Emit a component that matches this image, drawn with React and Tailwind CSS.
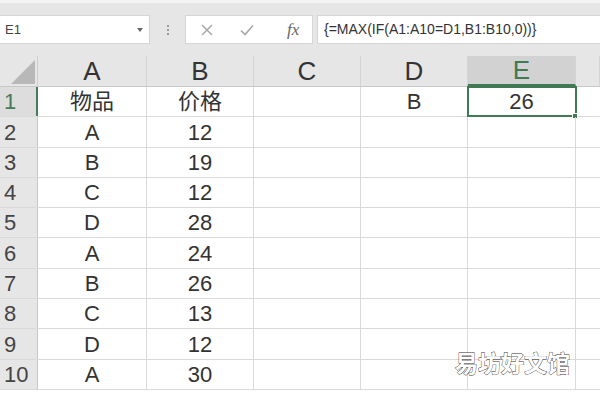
import React from 'react';

const cols = [
    { name: 'A', w: 'w-[109px]' },
    { name: 'B', w: 'w-[107px]' },
    { name: 'C', w: 'w-[107px]' },
    { name: 'D', w: 'w-[107px]' },
    { name: 'E', w: 'w-[108px]' },
    { name: '', w: 'w-[24px]' },
];

const rows = [
    { n: 1, h: 'h-[30px]', a: '物品', b: '价格', d: 'B', e: '26' },
    { n: 2, h: 'h-[31px]', a: 'A', b: '12' },
    { n: 3, h: 'h-[30px]', a: 'B', b: '19' },
    { n: 4, h: 'h-[30px]', a: 'C', b: '12' },
    { n: 5, h: 'h-[30px]', a: 'D', b: '28' },
    { n: 6, h: 'h-[31px]', a: 'A', b: '24' },
    { n: 7, h: 'h-[30px]', a: 'B', b: '26' },
    { n: 8, h: 'h-[30px]', a: 'C', b: '13' },
    { n: 9, h: 'h-[31px]', a: 'D', b: '12' },
    { n: 10, h: 'h-[30px]', a: 'A', b: '30' },
];

export default function App() {
    return (
        <div className="w-[600px] h-[395px] overflow-hidden bg-white relative font-['Liberation_Sans','Noto_Sans_CJK_SC',sans-serif] text-[#333]">
            {/* Formula bar */}
            <div className="h-[56px] bg-[#e6e6e6] border-t-[3px] border-[#f3f3f3] flex items-start pt-[12px]">
                <div className="w-[150px] h-[29px] bg-white border border-[#d6d6d6] border-l-0 flex items-center justify-between pl-[5px] pr-[6px]">
                    <span className="text-[13px] text-[#444]">E1</span>
                    <span className="w-0 h-0 border-l-[3px] border-r-[3px] border-t-[4px] border-l-transparent border-r-transparent border-t-[#666]" />
                </div>
                <div className="w-[35px] h-[29px] flex flex-col items-center justify-center gap-[2px]">
                    <span className="w-[2px] h-[2px] bg-[#9a9a9a]" />
                    <span className="w-[2px] h-[2px] bg-[#9a9a9a]" />
                    <span className="w-[2px] h-[2px] bg-[#9a9a9a]" />
                </div>
                <div className="w-[128px] h-[29px] bg-white border border-[#d6d6d6] flex items-center">
                    <svg width="14" height="14" viewBox="0 0 14 14" className="ml-[14px]">
                        <path d="M2 2 L12 12 M12 2 L2 12" stroke="#a8a8a8" strokeWidth="1.5" fill="none" />
                    </svg>
                    <svg width="16" height="14" viewBox="0 0 16 14" className="ml-[25px]">
                        <path d="M2 7.5 L6 11.5 L14 2.5" stroke="#a8a8a8" strokeWidth="1.6" fill="none" />
                    </svg>
                    <span className="ml-[32px] text-[17px] italic text-[#666] font-['Liberation_Serif',serif]">fx</span>
                </div>
                <div className="w-[4px]" />
                <div className="flex-1 h-[29px] bg-white border border-[#d6d6d6] border-r-0 flex items-center pl-[6px]">
                    <span className="text-[14px] text-[#333]">{'{=MAX(IF(A1:A10=D1,B1:B10,0))}'}</span>
                </div>
            </div>

            {/* Column header */}
            <div className="flex h-[31px] bg-[#e6e6e6] border-b border-[#c8c8c8]">
                <div className="w-[38px] h-full relative border-r border-[#cfcfcf]">
                    <span className="absolute right-[2px] bottom-[2px] w-0 h-0 [border-right:24px_solid_#b8b8b8] [border-top:24px_solid_transparent]" />
                </div>
                {cols.map((c) => (
                    <div
                        key={c.name + c.w}
                        className={`${c.w} h-full flex items-center justify-center text-[26px] border-r border-[#d4d4d4] ${c.name === 'E' ? 'bg-[#d2d2d2] text-[#3f7a54] border-b-2 border-b-[#3f7a54]' : 'text-[#333]'}`}
                    >
                        {c.name}
                    </div>
                ))}
            </div>

            {/* Rows */}
            {rows.map((r) => (
                <div key={r.n} className={`flex ${r.h} border-b border-[#d9d9d9]`}>
                    <div className={`w-[38px] h-full flex items-center pl-[4px] text-[22px] ${r.n === 1 ? 'bg-[#dddddd] text-[#4a7a5a] border-r-2 border-r-[#4a7a5a]' : 'bg-[#e6e6e6] text-[#444] border-r border-[#c8c8c8]'}`}>
                        {r.n}
                    </div>
                    <div className="w-[109px] h-full flex items-center justify-center text-[22px] border-r border-[#d9d9d9]">{r.a}</div>
                    <div className="w-[107px] h-full flex items-center justify-center text-[22px] border-r border-[#d9d9d9]">{r.b}</div>
                    <div className="w-[107px] h-full border-r border-[#d9d9d9]" />
                    <div className="w-[107px] h-full flex items-center justify-center text-[22px] border-r border-[#d9d9d9]">{r.d}</div>
                    <div className={`w-[108px] h-full flex items-center justify-center text-[22px] border-r border-[#d9d9d9] relative ${r.n === 1 ? 'outline-2 outline-[#3f7a54] -outline-offset-1' : ''}`}>
                        {r.e}
                        {r.n === 1 && <span className="absolute -right-[3px] -bottom-[3px] w-[6px] h-[6px] bg-[#3f7a54] border border-white" />}
                    </div>
                    <div className="w-[24px] h-full" />
                </div>
            ))}

            {/* Watermark */}
            <div className="absolute left-[455px] top-[353px] text-[23px] leading-none text-white font-bold [-webkit-text-stroke:0.8px_#333] [paint-order:stroke_fill]">
                易坊好文馆
            </div>
        </div>
    );
}
